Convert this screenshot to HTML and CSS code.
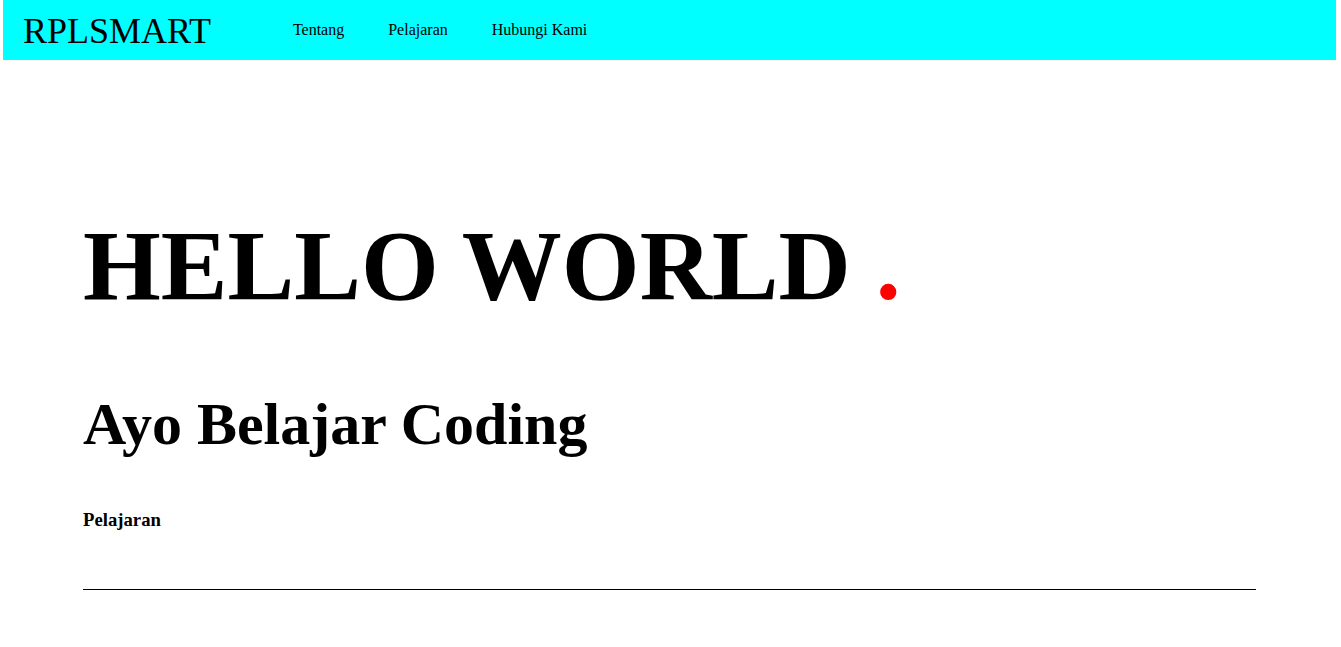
FILE: index.html
```html
<!DOCTYPE html>
<html lang="id">
<head>
<meta charset="utf-8">
<title>RPLSMART</title>
<link rel="stylesheet" href="styles.css">
</head>
<body>
<div class="page">
  <header class="topbar">
    <div class="logo">RPLSMART</div>
    <nav class="nav">
      <a href="#" class="nav-link">Tentang</a>
      <a href="#" class="nav-link">Pelajaran</a>
      <a href="#" class="nav-link">Hubungi Kami</a>
    </nav>
  </header>
  <main class="content">
    <h1 class="hero">HELLO WORLD <span class="dot">.</span></h1>
    <h2 class="tagline">Ayo Belajar Coding</h2>
    <h3 class="section-title">Pelajaran</h3>
    <hr class="divider">
  </main>
</div>
</body>
</html>
```
FILE: styles.css
```css
html, body {
  margin: 0;
  padding: 0;
  background: #ffffff;
}
body {
  font-family: "Liberation Serif", "Times New Roman", serif;
  color: #000;
}
.page {
  margin: 0 5px 0 3px;
}
.topbar {
  display: flex;
  align-items: center;
  height: 60px;
  background: #00ffff;
  padding-left: 20px;
}
.logo {
  font-size: 36px;
  line-height: 1;
  margin-top: 2px;
}
.nav {
  display: flex;
  gap: 44px;
  margin-left: 82px;
}
.nav-link {
  font-size: 16px;
  line-height: 1;
  color: #000;
  text-decoration: none;
}
.content {
  padding: 0 80px;
  display: flex;
  flex-direction: column;
}
.hero {
  font-size: 100px;
  line-height: 1;
  font-weight: bold;
  margin: 156px 0 0 0;
}
.dot {
  color: #ff0000;
}
.tagline {
  font-size: 60px;
  line-height: 1;
  font-weight: bold;
  margin: 78px 0 0 0;
}
.section-title {
  font-size: 18.72px;
  line-height: 1;
  font-weight: bold;
  margin: 57px 0 0 0;
}
.divider {
  margin: 59px 0 0 0;
  border: 0;
  border-top: 1px solid #000;
  height: 0;
}
```
